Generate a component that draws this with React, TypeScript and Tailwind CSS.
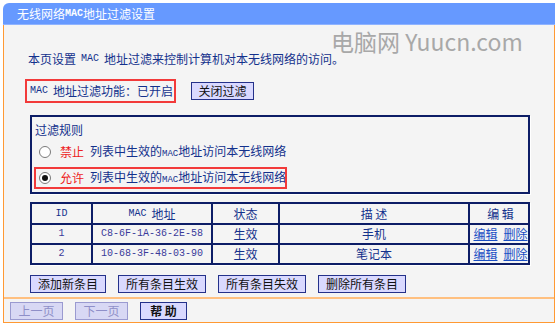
import React from "react";

const cjk = { fontFamily: '"Noto Sans CJK SC", "Noto Sans", sans-serif' };
const mono = { fontFamily: '"Liberation Mono", "DejaVu Sans Mono", monospace' };

function Btn({ children, className = "", disabled = false }: { children: React.ReactNode; className?: string; disabled?: boolean }) {
  return (
    <div
      className={
        "flex items-center justify-center h-[18px] text-[12px] leading-none border shrink-0 whitespace-nowrap " +
        (disabled
          ? "bg-[#d8d8f4] border-[#9a9ad0] text-[#8f8fc8] "
          : "bg-[#d9d9ff] border-[#24318a] text-[#111] ") +
        className
      }
    >
      {children}
    </div>
  );
}

function Radio({ checked }: { checked?: boolean }) {
  return (
    <div className="w-[12px] h-[12px] shrink-0 rounded-full border border-[#7a7a7a] bg-white flex items-center justify-center">
      {checked && <div className="w-[6px] h-[6px] rounded-full bg-[#111]" />}
    </div>
  );
}

const cols = "grid grid-cols-[61px_120px_67px_190px_61px]";

export default function App() {
  const rows = [
    { id: "1", mac: "C8-6F-1A-36-2E-58", desc: "手机" },
    { id: "2", mac: "10-68-3F-48-03-90", desc: "笔记本" },
  ];
  return (
    <div className="w-[556px] h-[327px] bg-white relative overflow-hidden" style={cjk}>
      <div className="ml-[3px] mt-[3px] w-[552px] flex flex-col">
        <div className="h-[22px] bg-[#6699ff] rounded-tl-[6px] border-b border-[#8fb3ff] flex items-center pl-[14px] text-white text-[12px] leading-none whitespace-nowrap">
          <span>无线网络</span>
          <span className="text-[10px] font-bold" style={mono}>MAC</span>
          <span>地址过滤设置</span>
        </div>
        <div className="relative border-l border-r border-[#ff9933] bg-[#f4f4f4] h-[272px] flex flex-col text-[#13318c]">
          <div className="absolute left-[327px] top-[5px] text-[23px] leading-none text-[#a8a8a8] whitespace-nowrap">
            电脑网 Yuucn.com
          </div>
          <div className="h-[27px] shrink-0" />
          <div className="relative h-[14px] flex items-center pl-[24px] text-[12px] leading-none whitespace-nowrap">
            本页设置 <span className="text-[10px] mx-[5px]" style={mono}>MAC</span> 地址过滤来控制计算机对本无线网络的访问。
          </div>
          <div className="h-[13px] shrink-0" />
          <div className="flex items-center h-[24px]">
            <div className="ml-[21px] w-[151px] h-[24px] border-[2px] border-[#f23a3a] flex items-center pl-[3px] text-[12px] leading-none whitespace-nowrap">
              <span className="text-[10px] mr-[5px]" style={mono}>MAC</span>地址过滤功能：已开启
            </div>
            <Btn className="ml-[15px] w-[63px]">关闭过滤</Btn>
          </div>
          <div className="h-[12px] shrink-0" />
          <div className="ml-[26px] w-[500px] h-[79px] border-[2px] border-[#0d1d66] shadow-[1px_1px_0_#ffffff] flex flex-col text-[12px] leading-none">
            <div className="h-[12px] flex items-center pl-[3px] mt-[7px]">过滤规则</div>
            <div className="h-[22px] mt-[5px] flex items-center pl-[7px] whitespace-nowrap">
              <Radio />
              <span className="ml-[9px] text-[#ee1c1c]">禁止</span>
              <span className="ml-[6px] whitespace-nowrap">
                列表中生效的<span className="text-[9px]" style={mono}>MAC</span>地址访问本无线网络
              </span>
            </div>
            <div className="ml-[2px] mt-[4px] w-[253px] h-[22px] border-[2px] border-[#f23a3a] flex items-center pl-[3px] whitespace-nowrap overflow-hidden">
              <Radio checked />
              <span className="ml-[9px] text-[#ee1c1c] shrink-0">允许</span>
              <span className="ml-[6px] whitespace-nowrap shrink-0">
                列表中生效的<span className="text-[9px]" style={mono}>MAC</span>地址访问本无线网络
              </span>
            </div>
          </div>
          <div className="h-[8px] shrink-0" />
          <div className="ml-[26px] w-[500px] border-[2px] border-[#0d1d66] shadow-[1px_1px_0_#ffffff] text-[12px] leading-none">
            <div className={cols + " h-[19px]"}>
              <div className="flex items-center justify-center border-r-[2px] border-[#0d1d66] text-[10px]" style={mono}>ID</div>
              <div className="flex items-center justify-center border-r-[2px] border-[#0d1d66]">
                <span className="text-[10px] mr-[5px]" style={mono}>MAC</span>地址
              </div>
              <div className="flex items-center justify-center border-r-[2px] border-[#0d1d66]">状态</div>
              <div className="flex items-center justify-center border-r-[2px] border-[#0d1d66]">描&nbsp;述</div>
              <div className="flex items-center justify-center">编&nbsp;辑</div>
            </div>
            {rows.map((r) => (
              <div key={r.id} className={cols + " h-[20px] border-t-[2px] border-[#0d1d66]"}>
                <div className="flex items-center justify-center border-r-[2px] border-[#0d1d66] text-[10px] text-[#3a3a9a]" style={mono}>{r.id}</div>
                <div className="flex items-center justify-center border-r-[2px] border-[#0d1d66] text-[10px] text-[#3a3a9a]" style={mono}>{r.mac}</div>
                <div className="flex items-center justify-center border-r-[2px] border-[#0d1d66]">生效</div>
                <div className="flex items-center justify-center border-r-[2px] border-[#0d1d66]">{r.desc}</div>
                <div className="flex items-center justify-center gap-[6px] text-[#1a4fc4]">
                  <span className="underline">编辑</span>
                  <span className="underline">删除</span>
                </div>
              </div>
            ))}
          </div>
          <div className="h-[10px] shrink-0" />
          <div className="flex items-center ml-[26px] gap-[12px]">
            <Btn className="w-[76px]">添加新条目</Btn>
            <Btn className="w-[88px]">所有条目生效</Btn>
            <Btn className="w-[88px]">所有条目失效</Btn>
            <Btn className="w-[88px]">删除所有条目</Btn>
          </div>
        </div>
        <div className="h-[2px] bg-[#ffc080] border-l border-r border-[#ff9933]" />
        <div className="h-[24px] bg-[#f4f4f4] border-l border-r border-b border-[#ff9933] flex items-center pl-[6px] gap-[12px]">
          <Btn disabled className="w-[53px]">上一页</Btn>
          <Btn disabled className="w-[53px]">下一页</Btn>
          <Btn className="w-[47px] font-bold">帮&nbsp;助</Btn>
        </div>
      </div>
    </div>
  );
}
